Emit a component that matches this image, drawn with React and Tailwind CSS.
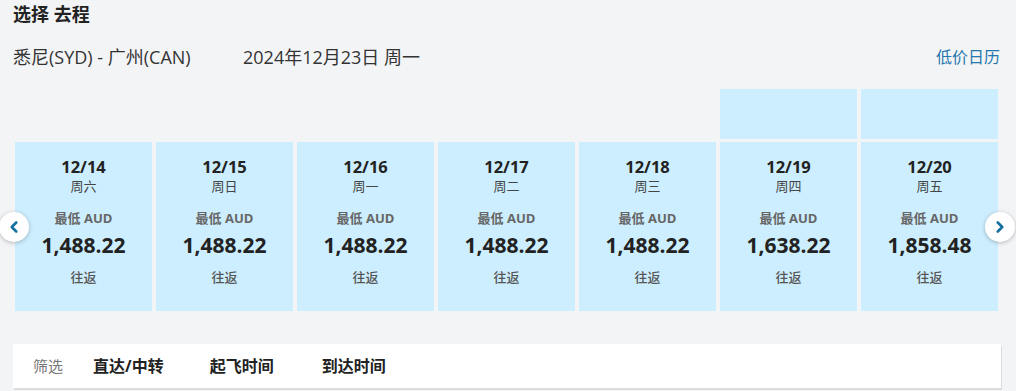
import { ChevronLeft, ChevronRight } from 'lucide-react';

const days = [
  { date: '12/14', week: '周六', price: '1,488.22', bar: false },
  { date: '12/15', week: '周日', price: '1,488.22', bar: false },
  { date: '12/16', week: '周一', price: '1,488.22', bar: false },
  { date: '12/17', week: '周二', price: '1,488.22', bar: false },
  { date: '12/18', week: '周三', price: '1,488.22', bar: false },
  { date: '12/19', week: '周四', price: '1,638.22', bar: true },
  { date: '12/20', week: '周五', price: '1,858.48', bar: true },
];

export default function App() {
  return (
    <div
      className="w-[1016px] h-[391px] bg-[#f3f4f6] overflow-hidden text-[#333]"
      style={{ fontFamily: '"Open Sans", "Noto Sans CJK SC", sans-serif' }}
    >
      {/* Title */}
      <h2 className="pl-[13px] pt-[2px] text-[18px] leading-[24px] font-bold text-[#222]">选择 去程</h2>

      {/* Route */}
      <div className="flex items-center justify-between pl-[13px] pr-[16px] mt-[19px] h-[24px]">
        <div className="flex items-center text-[18px] leading-[24px] text-[#333]">
          <span className="w-[230px]">悉尼(SYD) - 广州(CAN)</span>
          <span>2024年12月23日 周一</span>
        </div>
        <span className="text-[16px] text-[#2677ad] cursor-pointer">低价日历</span>
      </div>

      {/* Price calendar */}
      <div className="relative mt-[20px] px-[15px]">
        <div className="flex gap-[4px] items-end">
          {days.map((d) => (
            <div key={d.date} className="w-[137px] flex flex-col gap-[3px]">
              {d.bar && <div className="h-[50px] bg-[#cdeefe]" />}
              <div className="h-[169px] bg-[#cdeefe] flex flex-col items-center pt-[15px]">
                <span className="text-[16.5px] leading-[20px] font-bold text-[#222]">{d.date}</span>
                <span className="text-[13px] leading-[18px] text-[#444]">{d.week}</span>
                <span className="mt-[14px] text-[13px] leading-[18px] font-bold text-[#666]">最低 AUD</span>
                <span className="mt-[4px] text-[21px] leading-[28px] font-bold text-[#222]">{d.price}</span>
                <span className="mt-[9px] text-[13px] leading-[18px] font-medium text-[#555]">往返</span>
              </div>
            </div>
          ))}
        </div>

        <button className="absolute left-[-1px] top-[123px] w-[30px] h-[30px] rounded-full bg-white shadow-[0_1px_4px_rgba(0,0,0,0.25)] flex items-center justify-center">
          <ChevronLeft size={18} strokeWidth={3.5} className="text-[#14709f]" />
        </button>
        <button className="absolute left-[985px] top-[123px] w-[30px] h-[30px] rounded-full bg-white shadow-[0_1px_4px_rgba(0,0,0,0.25)] flex items-center justify-center">
          <ChevronRight size={18} strokeWidth={3.5} className="text-[#14709f]" />
        </button>
      </div>

      {/* Filter bar */}
      <div className="mt-[33px] ml-[13px] w-[988px] h-[44px] bg-white shadow-[1px_2px_0_#dcdcdc] flex items-center pl-[20px]">
        <span className="text-[15px] text-[#777]">筛选</span>
        <span className="ml-[30px] text-[16px] font-bold text-[#222]">直达/中转</span>
        <span className="ml-[46px] text-[16px] font-bold text-[#222]">起飞时间</span>
        <span className="ml-[48px] text-[16px] font-bold text-[#222]">到达时间</span>
      </div>
    </div>
  );
}
